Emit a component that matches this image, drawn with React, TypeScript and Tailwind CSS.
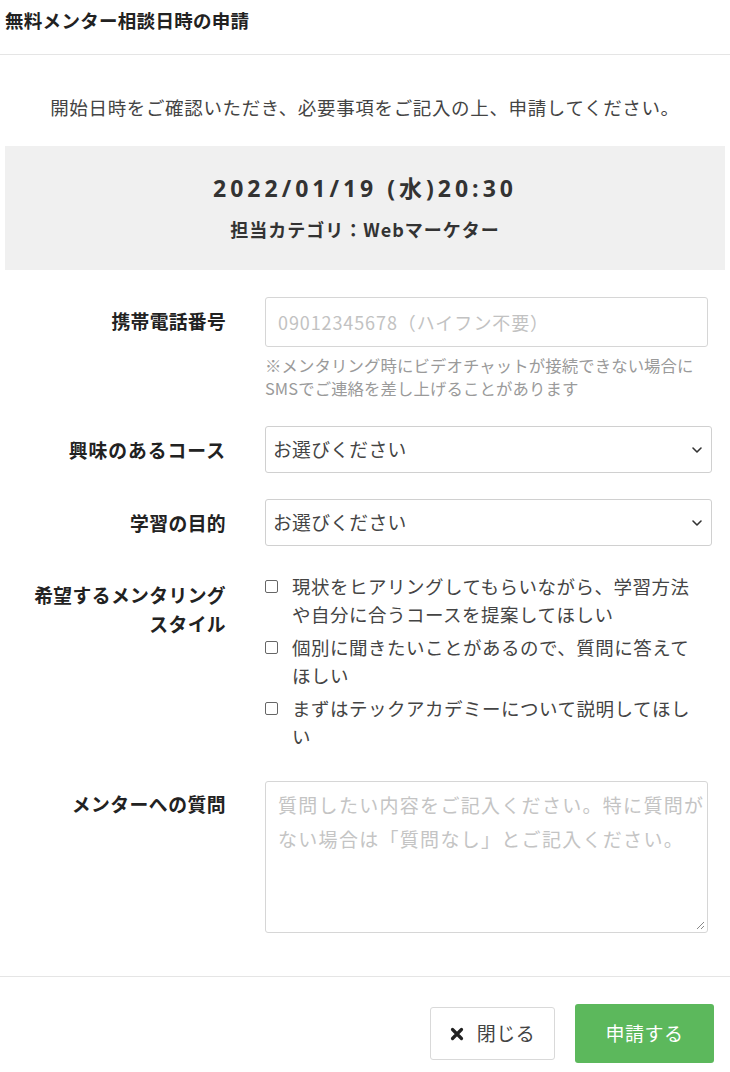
import React from "react";

const jp = { fontFamily: '"Noto Sans CJK JP", "Noto Sans", sans-serif' } as React.CSSProperties;

function Chevron() {
  return (
    <svg width="12" height="8" viewBox="0 0 12 8" className="absolute right-[8px] top-1/2 -translate-y-1/2">
      <path d="M2 2 L6 6 L10 2" fill="none" stroke="#333" strokeWidth="1.6" strokeLinecap="round" strokeLinejoin="round" />
    </svg>
  );
}

function Check({ lines }: { lines: string }) {
  return (
    <div className="flex items-start gap-[14px]">
      <span className="mt-[8px] block h-[13px] w-[13px] shrink-0 rounded-[2px] border border-[#666] bg-white" />
      <span className="w-[408px] text-[18.5px] leading-[28px] tracking-[0.5px] text-[#444]">{lines}</span>
    </div>
  );
}

export default function App() {
  return (
    <div className="w-[730px] h-[1072px] overflow-hidden bg-white text-[#333]" style={jp}>
      <div className="h-[55px] border-b border-[#e5e5e5] px-[5px] pt-[7px]">
        <h1 className="text-[18.5px] font-bold leading-[26px] tracking-[0.3px] text-[#222]">無料メンター相談日時の申請</h1>
      </div>
      <p className="mt-[39px] text-center text-[18.5px] leading-[26px] tracking-[0.65px] text-[#444]">
        開始日時をご確認いただき、必要事項をご記入の上、申請してください。
      </p>
      <div className="mx-[5px] mt-[26px] h-[124px] bg-[#f0f0f0] pt-[27px] text-center">
        <div
          className="text-[23px] font-bold leading-[30px] tracking-[4px] text-[#333]"
          style={{ fontFamily: '"Open Sans", "Noto Sans CJK JP", sans-serif' }}
        >
          2022/01/19 (水)20:30
        </div>
        <div className="mt-[14px] text-[18px] font-bold leading-[24px] tracking-[1px] text-[#333]">担当カテゴリ：Webマーケター</div>
      </div>

      <div className="mt-[27px] flex flex-col">
        {/* phone */}
        <div className="flex">
          <div className="w-[226px] shrink-0 pt-[11px] text-right text-[18.8px] font-bold leading-[26px] tracking-[0.3px] text-[#222]">携帯電話番号</div>
          <div className="ml-[39px] w-[443px]">
            <div className="flex h-[50px] items-center rounded-[3px] border border-[#d6d6d6] px-[12px] text-[18px] tracking-[0.9px] text-[#c2c2c2]">
              09012345678（ハイフン不要）
            </div>
            <p className="mt-[7px] text-[16.4px] leading-[23px] tracking-[0.1px] text-[#9a9a9a]">
              ※メンタリング時にビデオチャットが接続できない場合に
              <br />
              SMSでご連絡を差し上げることがあります
            </p>
          </div>
        </div>

        {/* course */}
        <div className="mt-[26px] flex items-center">
          <div className="w-[226px] shrink-0 text-right text-[18.8px] font-bold leading-[26px] tracking-[1px] text-[#222]">興味のあるコース</div>
          <div className="relative ml-[39px] flex h-[47px] w-[447px] items-center rounded-[3px] border border-[#d0d0d0] px-[7px] text-[18.8px] tracking-[0.3px] text-[#444]">
            お選びください
            <Chevron />
          </div>
        </div>

        {/* purpose */}
        <div className="mt-[26px] flex items-center">
          <div className="w-[226px] shrink-0 text-right text-[18.8px] font-bold leading-[26px] tracking-[0.4px] text-[#222]">学習の目的</div>
          <div className="relative ml-[39px] flex h-[47px] w-[447px] items-center rounded-[3px] border border-[#d0d0d0] px-[7px] text-[18.8px] tracking-[0.3px] text-[#444]">
            お選びください
            <Chevron />
          </div>
        </div>

        {/* style */}
        <div className="mt-[26px] flex">
          <div className="w-[226px] shrink-0 pt-[8px] text-right text-[18.8px] font-bold leading-[29px] tracking-[0.4px] text-[#222]">
            希望するメンタリング
            <br />
            スタイル
          </div>
          <div className="ml-[39px] flex flex-col gap-[5px]">
            <Check lines={"現状をヒアリングしてもらいながら、学習方法や自分に合うコースを提案してほしい"} />
            <Check lines={"個別に聞きたいことがあるので、質問に答えてほしい"} />
            <Check lines={"まずはテックアカデミーについて説明してほしい"} />
          </div>
        </div>

        {/* question */}
        <div className="mt-[31px] flex">
          <div className="w-[226px] shrink-0 pt-[10px] text-right text-[18.8px] font-bold leading-[26px] tracking-[0.5px] text-[#222]">メンターへの質問</div>
          <div className="relative ml-[39px] h-[152px] w-[443px] rounded-[3px] border border-[#d6d6d6] pl-[12px] pr-[2px] pt-[6px] text-[19px] leading-[34px] tracking-[1.3px] text-[#c4c4c4]">
            質問したい内容をご記入ください。特に質問がない場合は「質問なし」とご記入ください。
            <svg width="10" height="10" viewBox="0 0 10 10" className="absolute bottom-[2px] right-[2px]">
              <path d="M9 2 L2 9 M9 6 L6 9" stroke="#888" strokeWidth="1" />
            </svg>
          </div>
        </div>
      </div>

      <div className="mt-[43px] border-t border-[#e5e5e5]" />
      <div className="mr-[16px] mt-[27px] flex items-center justify-end gap-[20px]">
        <div className="flex h-[53px] w-[125px] items-center justify-center gap-[13px] rounded-[3px] border border-[#d9d9d9] bg-white text-[19px] tracking-[0.5px] text-[#444]">
          <svg width="14" height="14" viewBox="0 0 14 14">
            <path d="M2.5 2.5 L11.5 11.5 M11.5 2.5 L2.5 11.5" stroke="#222" strokeWidth="3.2" strokeLinecap="round" />
          </svg>
          閉じる
        </div>
        <div className="flex h-[59px] w-[139px] items-center justify-center rounded-[3px] bg-[#5cb85c] text-[19px] tracking-[0.5px] text-white">
          申請する
        </div>
      </div>
    </div>
  );
}
